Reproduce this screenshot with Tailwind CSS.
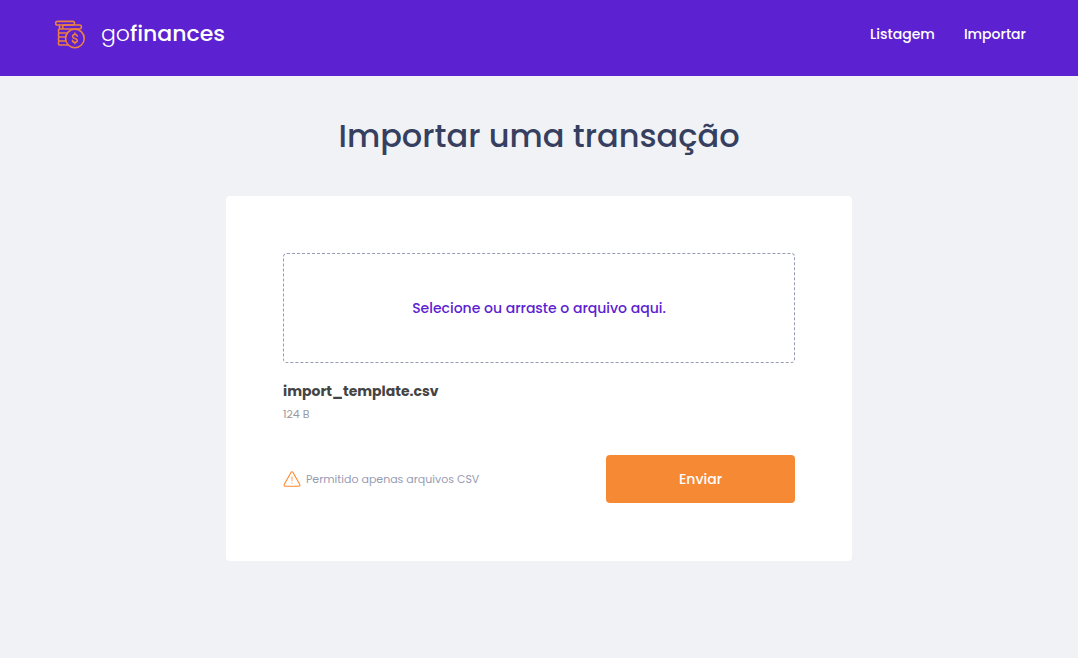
<!DOCTYPE html>
<html lang="pt-BR">
<head>
<meta charset="utf-8">
<meta name="viewport" content="width=device-width, initial-scale=1">
<title>gofinances</title>
<script src="https://cdn.jsdelivr.net/npm/@tailwindcss/browser@4"></script>
</head>
<body class="min-h-screen bg-[#f0f2f5] font-[Poppins,Inter,sans-serif]">
<header class="flex h-19 items-start justify-between bg-[#5c21d0] pr-13 pl-[54px] text-white">
  <a href="#" class="mt-[18px] flex h-8 items-center gap-[15px]" aria-label="gofinances">
    <svg class="h-8 w-8" viewBox="0 0 32 32" fill="none" stroke="#ec7f42" stroke-width="1.6" stroke-linejoin="round" stroke-linecap="round" aria-hidden="true">
      <rect x="1.7" y="3.4" width="18.8" height="3.6" rx="1.8"/>
      <rect x="8.6" y="7" width="18.8" height="4" rx="2"/>
      <path d="M5.5 7.2v3.3M8.6 11H5.7a1.2 1.2 0 0 0-1.2 1.2v1.6A1.2 1.2 0 0 0 5.7 15H13M12.5 15H5.7a1.2 1.2 0 0 0-1.2 1.2v1.6A1.2 1.2 0 0 0 5.7 19h5.6M11.3 19H5.7a1.2 1.2 0 0 0-1.2 1.2v1.6A1.2 1.2 0 0 0 5.7 23h5.6M11.8 23H5.7a1.2 1.2 0 0 0-1.2 1.2v1.6A1.2 1.2 0 0 0 5.7 27H14"/>
      <circle cx="20.9" cy="20.4" r="9.3"/>
      <path d="M23.2 18.3c0-1.2-1-1.8-2.3-1.8s-2.3.7-2.3 1.9c0 2.7 4.7 1.3 4.7 4 0 1.2-1.1 1.9-2.4 1.9s-2.4-.7-2.4-1.9M20.9 15v1.5M20.9 24.3v1.5"/>
    </svg>
    <span class="text-[22px] leading-8"><span class="font-light">go</span><span class="font-medium">finances</span></span>
  </a>
  <nav class="mt-[23px] flex gap-[29px] text-sm leading-[22px] font-medium">
    <a href="#">Listagem</a>
    <a href="#">Importar</a>
  </nav>
</header>
<main class="mx-auto w-full max-w-[626px] pt-9">
  <h1 class="text-center text-[32px] leading-[48px] font-medium text-[#363f5f]">Importar uma transação</h1>
  <form class="mt-9 rounded bg-white p-[57px] pb-[58px]">
    <label class="flex h-[110px] cursor-pointer items-center justify-center rounded border border-dashed border-[#969cb3] text-sm font-medium text-[#5c21d0]">
      Selecione ou arraste o arquivo aqui.
      <input type="file" accept=".csv" class="sr-only">
    </label>
    <div class="mt-4">
      <strong class="block text-sm leading-6 font-bold text-[#444444]">import_template.csv</strong>
      <span class="block text-[11px] leading-[22px] text-[#999999]">124 B</span>
    </div>
    <div class="mt-[30px] flex items-center justify-between">
      <p class="flex items-center gap-[5px] text-[11px] leading-4 text-[#969cb3]">
        <svg class="h-[18px] w-[18px]" viewBox="0 0 18 18" fill="none" stroke="#ff872c" stroke-linecap="round" stroke-linejoin="round" aria-hidden="true">
          <path stroke-width="1.1" d="M8 2.4a1.15 1.15 0 0 1 2 0l6.8 12.1a1.1 1.1 0 0 1-1 1.7H2.2a1.1 1.1 0 0 1-1-1.7z"/>
          <path stroke-width=".8" d="M9 6.8v4M9 13v.2"/>
        </svg>
        Permitido apenas arquivos CSV
      </p>
      <button type="button" class="h-12 w-[189px] rounded bg-[#f68934] text-sm font-medium text-white">Enviar</button>
    </div>
  </form>
</main>
</body>
</html>
